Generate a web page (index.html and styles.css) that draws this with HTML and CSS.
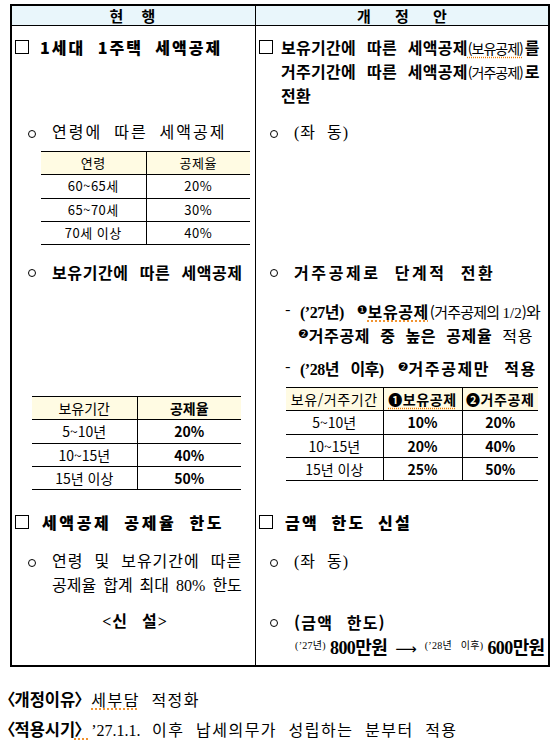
FILE: index.html
```html
<!DOCTYPE html>
<html lang="ko">
<head>
<meta charset="utf-8">
<title>1세대 1주택 세액공제 개정안</title>
<link rel="stylesheet" href="styles.css">
</head>
<body>
<div class="doc">
  <div class="hd hd-l">현 행</div>
  <div class="hd hd-r">개 정 안</div>

  <!-- row A -->
  <div class="cell l ra">
    <div class="item"><span class="box"></span><span class="t-bold ta">1세대 1주택 세액공제</span></div>
  </div>
  <div class="cell r ra">
    <div class="item item-r"><span class="box"></span>
      <div class="t-head">
        <div class="ln">보유기간에 따른 세액공제<span class="cond spell">(보유공제)</span>를</div>
        <div class="ln">거주기간에 따른 세액공제<span class="cond">(거주공제)</span>로</div>
        <div class="ln">전환</div>
      </div>
    </div>
  </div>

  <!-- row B -->
  <div class="cell l rb">
    <div class="bul"><span class="dot"></span><span class="t-norm wide">연령에 따른 세액공제</span></div>
    <table class="tbl tbl1">
      <tr class="th"><td class="c1">연령</td><td>공제율</td></tr>
      <tr><td class="c1">60~65세</td><td>20%</td></tr>
      <tr><td class="c1">65~70세</td><td>30%</td></tr>
      <tr><td class="c1">70세 이상</td><td>40%</td></tr>
    </table>
  </div>
  <div class="cell r rb">
    <div class="bul bul-r"><span class="dot"></span><span class="t-norm">(좌 동)</span></div>
  </div>

  <!-- row C -->
  <div class="cell l rc">
    <div class="bul"><span class="dot"></span><span class="t-bold2">보유기간에 따른 세액공제</span></div>
    <table class="tbl tbl2">
      <tr class="th"><td class="c1">보유기간</td><td class="b">공제율</td></tr>
      <tr><td class="c1">5~10년</td><td class="b">20%</td></tr>
      <tr><td class="c1">10~15년</td><td class="b">40%</td></tr>
      <tr><td class="c1">15년 이상</td><td class="b">50%</td></tr>
    </table>
  </div>
  <div class="cell r rc">
    <div class="bul bul-r"><span class="dot"></span><span class="t-bold2 wide2">거주공제로 단계적 전환</span></div>
    <div class="dash d1">
      <span class="dh">-</span>
      <div class="dl">
        <div class="ln"><span class="yr">(’27년)</span> <span class="num">❶</span><span class="semi spell">보유공제</span><span class="cond">(거주공제의 <span class="lat">1/2</span>)</span>와</div>
        <div class="ln"><span class="num">❷</span><span class="semi">거주공제 중 높은 공제율</span> <span class="lt">적용</span></div>
      </div>
    </div>
    <div class="dash d2">
      <span class="dh">-</span>
      <div class="dl">
        <div class="ln"><span class="yr">(’28년 이후)</span> <span class="num">❷</span><span class="semi">거주공제만 적용</span></div>
      </div>
    </div>
    <table class="tbl tbl3">
      <tr class="th"><td class="c1">보유/거주기간</td><td class="c2 b"><span class="spell">❶보유공제</span></td><td class="b">❷거주공제</td></tr>
      <tr><td class="c1">5~10년</td><td class="c2 b">10%</td><td class="b">20%</td></tr>
      <tr><td class="c1">10~15년</td><td class="c2 b">20%</td><td class="b">40%</td></tr>
      <tr><td class="c1">15년 이상</td><td class="c2 b">25%</td><td class="b">50%</td></tr>
    </table>
  </div>

  <!-- row D -->
  <div class="cell l rd">
    <div class="item"><span class="box"></span><span class="t-bold td">세액공제 공제율 한도</span></div>
  </div>
  <div class="cell r rd">
    <div class="item item-r item-d"><span class="box"></span><span class="t-bold tdr">금액 한도 신설</span></div>
  </div>

  <!-- row E -->
  <div class="cell l re">
    <div class="bul"><span class="dot"></span>
      <div class="t-norm">
        <div class="ln">연령 및 보유기간에 따른</div>
        <div class="ln tight">공제율 합계 최대 <span class="lat">80%</span> 한도</div>
      </div>
    </div>
  </div>
  <div class="cell r re">
    <div class="bul bul-r"><span class="dot"></span><span class="t-norm">(좌 동)</span></div>
  </div>

  <!-- row F -->
  <div class="cell l rf">
    <div class="new">&lt;신 설&gt;</div>
  </div>
  <div class="cell r rf">
    <div class="bul bul-r"><span class="dot"></span><span class="t-bold2 wide3">(금액 한도)</span></div>
    <div class="amt"><span class="sm">(’27년)</span> <span class="big">800만원</span> <span class="arr">⟶</span> <span class="sm">(’28년 이후)</span> <span class="big">600만원</span></div>
  </div>
</div>

<div class="notes">
  <div class="note"><span class="nk"><span class="bo">〈</span>개정이유<span class="bc">〉</span></span> <span class="nv"><span class="spell">세부담</span> 적정화</span></div>
  <div class="note"><span class="nk"><span class="bo">〈</span>적용시기<span class="bc spell">〉</span></span> <span class="nv"><span class="lat">’27.1.1.</span> 이후 납세의무가 성립하는 분부터 적용</span></div>
</div>
</body>
</html>
```

FILE: styles.css
```css
* { box-sizing: border-box; }
html, body { margin: 0; padding: 0; background: #fff; }
body {
  padding: 4px 0 0 10px;
  font-family: "Noto Sans CJK KR", "Noto Sans", sans-serif;
  color: #000;
}

.doc {
  width: 540px;
  border: 2px solid #000;
  display: grid;
  grid-template-columns: 244px 292px;
  grid-template-rows: 20px 86px 143px 245px 45px 55px 65px;
}

.hd {
  background: #e9f6fb;
  border-bottom: 1px solid #000;
  text-align: center;
  font-weight: 700;
  font-size: 15px;
  line-height: 19px;
  word-spacing: 14px;
}
.hd-l { border-right: 1px solid #000; padding-right: 2px; }
.hd-r { word-spacing: 20px; }

.cell { min-width: 0; overflow: hidden; }
.cell.l { border-right: 1px solid #000; padding-left: 3px; }
.cell.r { padding-left: 3px; }

.ln { line-height: 24px; height: 24px; white-space: nowrap; }

/* square items */
.item { display: flex; align-items: flex-start; }
.box {
  flex: none;
  width: 14px;
  height: 14px;
  border: 1.5px solid #000;
  margin-top: 5px;
  margin-right: 11px;
}
.item-r .box { margin-right: 8px; }
.item-d .box { margin-right: 12px; }

.ra { padding-top: 9px; }
.t-bold {
  font-size: 16px;
  font-weight: 900;
  line-height: 24px;
  letter-spacing: 1px;
  word-spacing: 5px;
  white-space: nowrap;
}
.ta { letter-spacing: 2px; word-spacing: 6px; }
.td { letter-spacing: 2.6px; word-spacing: 6px; margin-left: 2px; }
.tdr { letter-spacing: 2.2px; word-spacing: 6px; }
.t-head {
  font-size: 16px;
  font-weight: 700;
  letter-spacing: 0.3px;
  word-spacing: 6px;
}
.cond {
  font-weight: 400;
  font-size: 14px;
  letter-spacing: -1px;
  word-spacing: 0;
}
.t-head .cond { margin-right: 2px; }
.spell {
  text-decoration: underline dotted #ee7a00;
  text-underline-offset: 3px;
}

/* circle bullets */
.bul { display: flex; align-items: flex-start; padding-left: 13px; }
.bul-r { padding-left: 11px; }
.dot {
  flex: none;
  width: 8px;
  height: 8px;
  border: 1px solid #000;
  border-radius: 50%;
  margin-top: 9px;
  margin-right: 16px;
}
.t-norm {
  font-family: "Liberation Serif", "Noto Sans CJK KR", serif;
  font-size: 16px;
  line-height: 24px;
  letter-spacing: 1px;
  word-spacing: 6px;
  white-space: nowrap;
}
.t-norm.wide { letter-spacing: 2px; }
.t-norm .tight { letter-spacing: 0; word-spacing: 3px; }
.t-bold2 {
  font-size: 16px;
  font-weight: 700;
  line-height: 24px;
  letter-spacing: 0.6px;
  word-spacing: 6px;
  white-space: nowrap;
}
.wide2 { letter-spacing: 2.6px; word-spacing: 7px; }
.wide3 { letter-spacing: 1.2px; word-spacing: 8px; }
.lat { font-family: "Liberation Serif", serif; letter-spacing: 0; }

.rb { padding-top: 9px; }
.rc { padding-top: 5px; }
.rd { padding-top: 10px; }
.re { padding-top: 5px; }
.rf { padding-top: 10px; }

/* tables */
.tbl {
  border-collapse: collapse;
  font-family: "Noto Sans CJK KR", sans-serif;
  font-size: 13px;
}
.tbl td {
  border-top: 1px solid #000;
  border-bottom: 1px solid #000;
  height: 23.3px;
  padding: 0;
  text-align: center;
  line-height: 22px;
  white-space: nowrap;
}
.tbl .c1 { border-right: 1px solid #000; }
.tbl .c2 { border-right: 1px solid #000; }
.tbl .th td { background: #fffbe3; }
.tbl .b { font-weight: 700; }
.tbl1 { width: 209px; margin: 6px 0 0 26px; }
.tbl1 td { letter-spacing: 0.5px; }
.tbl1 .c1 { width: 105px; }
.tbl2 { width: 209px; margin: 112px 0 0 17px; font-size: 14px; }
.tbl2 .c1 { width: 105px; }
.tbl3 { width: 252px; margin: 8px 0 0 27px; font-size: 14px; }
.tbl3 .c1 { width: 97px; }
.tbl3 .c2 { width: 79px; }
.tbl3 .th td { letter-spacing: 0.6px; }

/* dash lines */
.dash { display: flex; padding-left: 26px; font-size: 16px; }
.d1 { margin-top: 14px; }
.d2 { margin-top: 9px; }
.dh { width: 15px; line-height: 24px; flex: none; }
.dl { letter-spacing: 0.6px; word-spacing: 5px; }
.d2 .dl { letter-spacing: 1.6px; word-spacing: 8px; }
.yr { font-family: "Liberation Serif", "Noto Sans CJK KR", serif; font-weight: 700; letter-spacing: -0.5px; }
.num { font-family: "DejaVu Sans", sans-serif; font-size: 12px; vertical-align: 4px; letter-spacing: 0; }
.d1 .ln:first-child .num { margin-left: 3px; }
.semi { font-weight: 700; }
.lt { font-weight: 400; }
.d1 .cond { font-size: 15px; letter-spacing: -0.8px; margin-left: 1px; }
.d1 .ln + .ln { margin-left: -2px; }

.new {
  text-align: center;
  font-family: "Liberation Serif", "Noto Sans CJK KR", serif;
  font-size: 16px;
  font-weight: 700;
  line-height: 24px;
  letter-spacing: 1px;
  word-spacing: 9px;
}

.amt {
  padding-left: 36px;
  white-space: nowrap;
  line-height: 24px;
  font-family: "Liberation Serif", "Noto Sans CJK KR", serif;
}
.sm { font-size: 10px; vertical-align: 5px; letter-spacing: 0.3px; word-spacing: 6px; }
.big { font-size: 18px; font-weight: 700; letter-spacing: -0.6px; }
.arr { font-family: "DejaVu Sans", sans-serif; font-size: 15px; margin: 0 4px; }

/* notes */
.notes { padding: 18px 0 0 0; margin-left: -3px; }
.note { line-height: 28px; white-space: nowrap; }
.nk {
  font-family: "Noto Sans CJK KR", sans-serif;
  font-size: 16.5px;
  font-weight: 700;
  letter-spacing: 0;
}
.bo { margin-left: -8px; margin-right: -1px; }
.bc { margin-right: -8px; margin-left: -1px; }
.nv {
  font-family: "Liberation Serif", "Noto Sans CJK KR", serif;
  font-size: 16px;
  letter-spacing: 1.5px;
  word-spacing: 6px;
  margin-left: 4px;
}
```
